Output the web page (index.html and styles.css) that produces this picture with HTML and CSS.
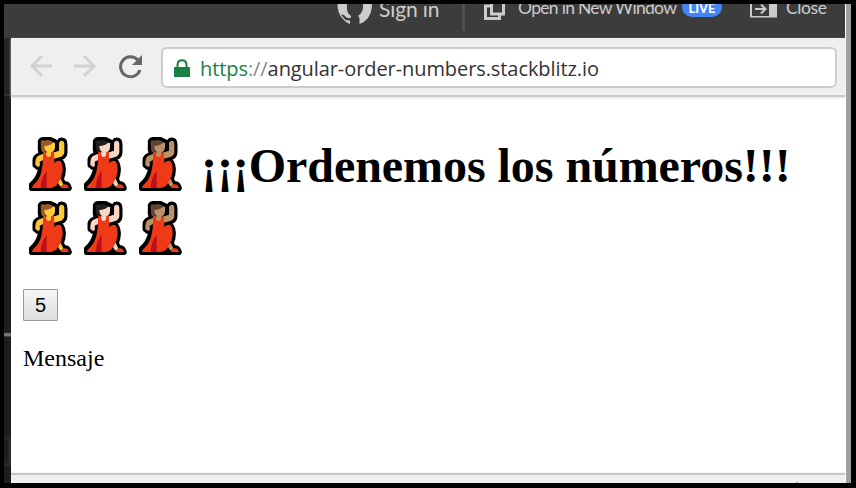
FILE: index.html
```html
<!DOCTYPE html>
<html lang="es">
<head>
<meta charset="utf-8">
<title>Ordenemos los números</title>
<link rel="stylesheet" href="styles.css">
</head>
<body>
<svg class="defs" aria-hidden="true">
  <defs>
    <symbol id="dancer" viewBox="0 0 129 162">
      <path d="M42 48Q34 42 36 28V13Q39 8 48 10Q57 6 67 11L78 16V40L91 38V22Q91 11 98 11Q106 11 106 22V45Q106 57 94 61L84 67Q100 74 101 94Q102 112 95 126L103 143Q117 139 119 153H9V144Q29 128 37 97V82L28 90L20 84V70Q20 61 30 57Z" fill="#000" stroke="#000" stroke-width="19" stroke-linejoin="round"/>
      <path class="hair" d="M35 14Q39 8 48 11Q57 7 67 12L78 17L68 24L50 30L50 48Q36 46 36 35Z"/>
      <path class="skin" d="M46 27Q64 26 71 18L78 18V32Q76 45 66 46H56Q46 42 46 27ZM50 46H68V57Q59 65 50 57ZM43 50 27 57Q18 63 19 84L29 91Q35 84 32 74L44 68ZM71 47 90 41V22Q90 11 98 11Q106 11 106 22V46Q105 56 94 60L75 65ZM84 133 95 125 104 145 94 149Z"/>
      <path d="M42 46H51Q50 60 58 60Q68 61 67 46H75L76 78Q85 69 94 72Q102 82 101 100Q99 121 89 136Q79 153 64 153H9Q9 145 17 140Q32 126 37 104Q43 83 42 61ZM96 153 98 145Q115 136 120 153Z" fill="#f03a17"/>
      <path d="M53 102V153H35Q36 122 53 102Z" fill="#b9101c"/>
    </symbol>
  </defs>
</svg>
<div class="screen">
  <header class="topbar">
    <svg class="github" viewBox="0 0 36 22"><path d="M.5 0Q.5 9 5 14Q8 18 13 20V16.5Q8 17 6 13L4 10.5Q7 10 9 13Q11 15 14 13.5V12Q9 9 10 0ZM35 0Q35 8 31 14Q28 18 22.500 20V15Q22.500 13 21 12Q27 8 26 0Z"/></svg>
    <span class="signin">Sign in</span>
    <span class="divider"></span>
    <svg class="windows" viewBox="0 0 22 20"><path d="M7.500 0V13H19.500V0M8 5H1.500V17.500H15.500V13" fill="none" stroke="#ccc" stroke-width="3"/></svg>
    <span class="open">Open in New Window</span>
    <span class="live">LIVE</span>
    <svg class="exit" viewBox="0 0 27 18"><path d="M0 0H27V17.500H0ZM2 0V16H19V0Z" fill-rule="evenodd"/><path d="M5 9H15M11 4.500 15.500 9 11 13.500" fill="none" stroke="#ccc" stroke-width="2"/></svg>
    <span class="close">Close</span>
  </header>
  <div class="body">
    <aside class="gutter"><i class="edge"></i><i class="mark"></i><i class="box"></i></aside>
    <main class="browser">
      <nav class="toolbar">
        <svg class="arrow" viewBox="0 0 24 24"><path d="M23 12H3M13 2 3 12 13 22"/></svg>
        <svg class="arrow forward" viewBox="0 0 24 24"><path d="M1 12H21M11 2 21 12 11 22"/></svg>
        <svg class="reload" viewBox="0 0 24 24"><path d="M21 15A10 10 0 1 1 19 5" fill="none" stroke="#666" stroke-width="3"/><path d="M23 0V10H13Z" fill="#666"/></svg>
        <div class="address">
          <svg class="lock" viewBox="0 0 16 19"><path d="M1 8H15Q16 8 16 9V18H0V9Q0 8 1 8Z" fill="#188043"/><path d="M3.500 9V6Q3.500 1.200 8 1.200T12.500 6V9" fill="none" stroke="#188043" stroke-width="2"/></svg>
          <span class="url"><span class="secure">https</span><span class="slashes">://</span>angular-order-numbers.stackblitz.io</span>
        </div>
      </nav>
      <section class="page">
        <h1><svg class="dancer yellow"><use href="#dancer"/></svg><svg class="dancer light"><use href="#dancer"/></svg><svg class="dancer medium"><use href="#dancer"/></svg> <span class="title">¡¡¡Ordenemos los números!!!</span> <svg class="dancer yellow"><use href="#dancer"/></svg><svg class="dancer light"><use href="#dancer"/></svg><svg class="dancer medium"><use href="#dancer"/></svg></h1>
        <button>5</button>
        <p>Mensaje</p>
      </section>
      <footer class="bottom"><i></i></footer>
    </main>
  </div>
</div>
</body>
</html>
```
FILE: styles.css
```css
* { box-sizing: border-box; }
body { margin: 0; background: #000; overflow: hidden; }
svg { display: block; flex: none; }
.defs { position: absolute; width: 0; height: 0; }
.screen { width: 847px; height: 479px; margin: 4px 0 0 4px; border-right: 5px solid #a0a0a0; overflow: hidden; background: #fff; }
.topbar { display: flex; width: 841px; height: 34px; background: #3c3c3c; color: #ccc; font-family: Lato, sans-serif; padding-left: 333px; white-space: nowrap; overflow: hidden; }
.github { width: 36px; height: 22px; fill: #ccc; }
.signin { width: 83px; margin-left: 6px; font-size: 21px; line-height: 24px; margin-top: -7px; letter-spacing: -.1px; }
.divider { width: 3px; height: 27px; background: #505050; margin-left: 0; }
.windows { width: 22px; height: 20px; margin-left: 19px; margin-top: -3px; }
.open { width: 165px; margin-left: 12px; margin-right: -1px; margin-top: -7px; font-size: 17.5px; line-height: 22px; letter-spacing: -.7px; }
.live { width: 40px; height: 20px; margin-top: -7px; border-radius: 10px; background: #4285f4; color: #fff; font: 700 13px/22px Lato, sans-serif; text-align: center; }
.exit { width: 27px; height: 18px; margin-left: 28px; margin-top: -4px; fill: #ccc; }
.close { margin-left: 9px; margin-top: -7px; font-size: 17.5px; line-height: 22px; letter-spacing: -.4px; }
.body { display: flex; height: 445px; }
.gutter { width: 7px; background: #1e1e1e; display: flex; flex-direction: column; }
.edge { height: 58px; background: #252525; border-bottom: 1px solid #333; }
.mark { height: 4px; margin-top: 237px; background: #777; border-bottom: 1px solid #444; }
.box { height: 29px; margin-top: 100px; border: solid #292929; border-width: 3px 3px 3px 0; }
.browser { width: 834px; display: flex; flex-direction: column; }
.toolbar { height: 59px; background: #efefef; border-bottom: 2px solid #ccc; display: flex; padding: 9px 8px 7px 18px; box-shadow: 0 1px 2px #ddd; }
.arrow { width: 24px; height: 24px; margin-top: 7px; fill: none; stroke: #d2d2d2; stroke-width: 3; }
.forward { margin-left: 20px; }
.reload { width: 24px; height: 24px; margin: 8px 0 0 22px; }
.address { width: 676px; height: 41px; margin-left: 18px; border: 2px solid #ccc; border-radius: 6px; background: #fff; display: flex; padding-left: 11px; }
.lock { width: 16px; height: 19px; margin-top: 10px; }
.url { margin-left: 10px; font: 20px/40px "Open Sans", sans-serif; letter-spacing: -.08px; color: #333; white-space: nowrap; }
.secure { color: #188043; }
.slashes { color: #888; }
.page { height: 376px; padding: 37px 12px 0; border-bottom: 1px solid #f5f5f5; }
h1 { margin: 0; font: 700 48px/64px "Liberation Serif", serif; color: #000; letter-spacing: -.05px; }
.dancer { display: inline-block; width: 43px; height: 54px; margin: 0 6px; vertical-align: -9px; }
.title { margin-left: 1px; }
.yellow { --skin: #ffc83d; --hair: #945a2d; }
.light { --skin: #f7d7c4; --hair: #202020; }
.medium { --skin: #bb9167; --hair: #63443b; }
.hair { fill: var(--hair); }
.skin { fill: var(--skin); }
button { display: block; width: 35px; height: 32px; margin-top: 27px; padding: 0; border: 1px solid #999; border-radius: 1px; background: linear-gradient(#f6f6f6, #ddd); font: 20px/30px "Liberation Sans", sans-serif; color: #000; }
p { margin: 24px 0 0; font: 24px/27px "Liberation Serif", serif; color: #000; }
.bottom { height: 10px; border-top: 2px solid #c5c5c5; background: #efefef; padding: 7px 0 0 785px; }
.bottom i { display: block; width: 2px; height: 1px; background: #999; }
```
